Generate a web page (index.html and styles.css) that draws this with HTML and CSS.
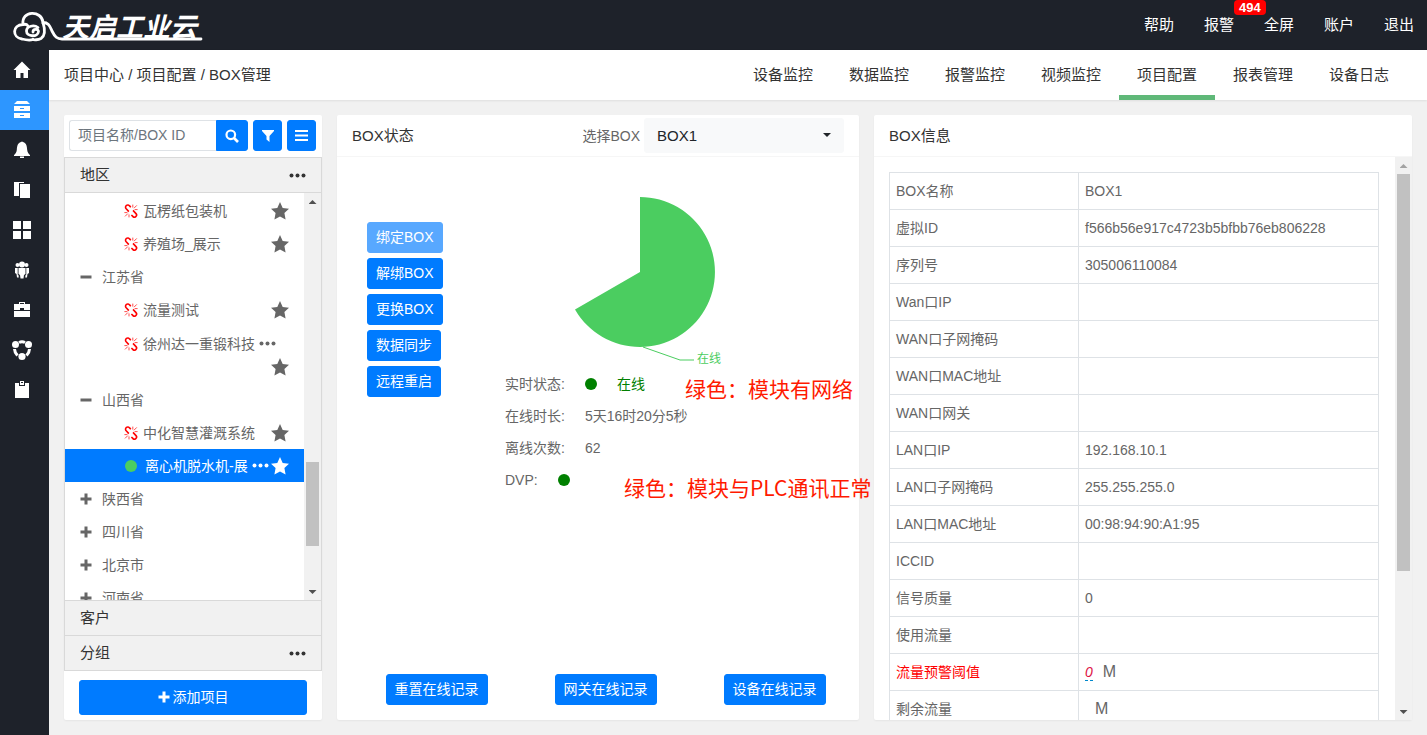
FILE: index.html
```html
<!DOCTYPE html>
<html lang="zh-CN">
<head>
    <meta charset="UTF-8">
    <meta name="viewport" content="width=device-width, initial-scale=1.0">
    <title>BOX管理</title>
    <link rel="stylesheet" href="styles.css">
</head>
<body>
    <!-- shared icons -->
    <svg class="sprite" aria-hidden="true">
        <symbol id="i-star" viewBox="0 0 18 18"><path d="M9 0l2.7 5.9 6.3.8-4.6 4.4 1.2 6.4L9 14.4l-5.6 3.1 1.2-6.4L0 6.7l6.3-.8z"/></symbol>
        <symbol id="i-dots" viewBox="0 0 17 5"><circle cx="2.5" cy="2.5" r="2"/><circle cx="8.5" cy="2.5" r="2"/><circle cx="14.5" cy="2.5" r="2"/></symbol>
        <symbol id="i-plus" viewBox="0 0 12 12"><path d="M4.5 0.5h3v4h4v3h-4v4h-3v-4h-4v-3h4z"/></symbol>
        <symbol id="i-minus" viewBox="0 0 12 12"><path d="M0.5 4.5h11v3h-11z"/></symbol>
        <symbol id="i-broken" viewBox="0 0 14 14"><g fill="none" stroke="currentColor"><path stroke-width="1.6" d="M6.800 3.200L5.600 1.900A2.200 2.200 0 0 0 2 4.600L4.800 7.600M9 6.400l3 3.200a2 2 0 0 1-3.200 2.800L7.400 11"/><path stroke-width="0.700" d="M8.800 3.600V.6M10 4.200l2.800-2.800M10.600 5.600h3M5 10.400v3M3.800 9.600L1 12.400M3.400 8.600H.4"/></g></symbol>
    </svg>

    <header class="header">
        <a class="logo" href="#" aria-label="天启工业云">
            <svg width="205" height="50" viewBox="0 0 205 50">
                <g fill="none" stroke="#fff" stroke-width="2.8" stroke-linecap="round">
                    <path d="M33 39.500C30 40.500 26 40 22 39C12 37.500 12 25 23 24.500C21 10 42 10 43 22.500C49 22.500 50 27 52 31C55 37 57 39 62 39H201"/>
                    <path d="M23 24.500C25 24 27 24.500 28 26M43 22.500C45 29 45 36 41 38.500C38 40 34 40 33 39.500"/>
                    <path d="M38 27.500C34 24.500 26.500 26 26.500 31C26.500 37 38 37.500 38.500 31.500C38.500 28.500 33 28.500 33 32"/>
                </g>
                <text class="logo-text" x="62" y="37">天启工业云</text>
            </svg>
        </a>
        <nav class="header-nav">
            <a href="#">帮助</a>
            <a href="#" class="alarm">报警<span class="badge">494</span></a>
            <a href="#">全屏</a>
            <a href="#">账户</a>
            <a href="#">退出</a>
        </nav>
    </header>

    <div class="layout">
        <nav class="sidebar">
            <a href="#" aria-label="首页"><svg viewBox="0 0 18 18"><path d="M9 .5L17.500 9H15v8h-4.500v-5h-3v5H3V9H.5z"/></svg></a>
            <a href="#" class="active" aria-label="项目"><svg viewBox="0 0 18 18"><path d="M4 0h10l3 3H1zM1 5h16v5H1zM1 12h16v5H1z"/><path class="cut" d="M7 7h4v1H7zM7 14h4v1H7z"/></svg></a>
            <a href="#" aria-label="报警"><svg viewBox="0 0 18 18"><path d="M8 1q1-1 2 0c3.500 1 4 4.500 4.200 8 .3 2.500 1.500 4 2.800 5v1H1v-1c1.300-1 2.500-2.500 2.800-5C4 5.500 4.500 2 8 1zM7 15.500h4v1.500H7z"/></svg></a>
            <a href="#" aria-label="文档"><svg viewBox="0 0 18 18"><path d="M1 1h10v1H6v13H1zM7 3h10v14H7z"/></svg></a>
            <a href="#" aria-label="面板"><svg viewBox="0 0 18 18"><path d="M0 0h8v8H0zM10 0h8v8h-8zM0 10h8v8H0zM10 10h8v8h-8z"/></svg></a>
            <a href="#" aria-label="用户"><svg viewBox="0 0 18 18"><circle cx="9" cy="3.500" r="3"/><circle cx="4.500" cy="4" r="2"/><circle cx="13.500" cy="4" r="2"/><path d="M5.500 7h7v6l-1.500 1-.5 3.500h-3L7 14l-1.500-1zM2 7h2.700v6.500l.8.700.3 2.300H4L3.500 13 2 12zM16 7h-2.700v6.500l-.8.700-.3 2.300H14l.5-3.500 1.500-1z"/></svg></a>
            <a href="#" aria-label="工具"><svg viewBox="0 0 18 18"><path d="M6 1h6v2h5v6h-6V7H7v2H1V3h5zm1 1v1h4V2zM1 10h16v6H1z"/></svg></a>
            <a href="#" aria-label="关联"><svg class="big" viewBox="0 0 22 22"><circle cx="4.500" cy="5.500" r="3.500"/><circle cx="17.500" cy="5.500" r="3.500"/><circle cx="11" cy="17.500" r="3.600"/><path fill="none" stroke="#fff" stroke-width="3" d="M8 3.500Q11 2 14 3.500M3.500 10Q3.500 13 6.500 16.500M18.500 10Q18.500 13 15.500 16.500"/></svg></a>
            <a href="#" aria-label="记录"><svg viewBox="0 0 18 18"><path d="M2 2h4v3h6V2h4v15H2zM7 4V0h4v4z"/><path class="dark" d="M8 1h2v1H8z"/></svg></a>
        </nav>

        <div class="main">
            <div class="topbar">
                <div class="breadcrumb">项目中心 / 项目配置 / BOX管理</div>
                <nav class="tabs">
                    <a href="#">设备监控</a>
                    <a href="#">数据监控</a>
                    <a href="#">报警监控</a>
                    <a href="#">视频监控</a>
                    <a href="#" class="active">项目配置</a>
                    <a href="#">报表管理</a>
                    <a href="#">设备日志</a>
                </nav>
            </div>

            <main class="content">
                <section class="card">
                    <form class="search">
                        <input type="text" placeholder="项目名称/BOX ID" aria-label="项目名称/BOX ID">
                        <button type="button" class="btn search-btn" aria-label="搜索"><svg width="14" height="14" viewBox="0 0 14 14"><circle cx="5.800" cy="5.800" r="4.300" stroke-width="2.200"/><path stroke-width="2.600" d="M9 9l4 4"/></svg></button>
                        <button type="button" class="btn icon-btn" aria-label="筛选"><svg width="12" height="12" viewBox="0 0 12 12"><path d="M0 0h12v1L7.500 6v6l-3-2.500V6L0 1z"/></svg></button>
                        <button type="button" class="btn icon-btn" aria-label="列表"><svg width="13" height="11" viewBox="0 0 13 11"><path d="M0 0h13v2H0zM0 4.500h13v2H0zM0 9h13v2H0z"/></svg></button>
                    </form>
                    <div class="accordion">
                        <h3>地区<svg class="dots"><use href="#i-dots"/></svg></h3>
                        <div class="tree-wrap">
                            <ul class="tree">
                                <li class="leaf"><svg class="broken"><use href="#i-broken"/></svg><span>瓦楞纸包装机</span><svg class="star"><use href="#i-star"/></svg></li>
                                <li class="leaf"><svg class="broken"><use href="#i-broken"/></svg><span>养殖场_展示</span><svg class="star"><use href="#i-star"/></svg></li>
                                <li><svg class="fold"><use href="#i-minus"/></svg>江苏省</li>
                                <li class="leaf"><svg class="broken"><use href="#i-broken"/></svg><span>流量测试</span><svg class="star"><use href="#i-star"/></svg></li>
                                <li class="leaf tall"><svg class="broken"><use href="#i-broken"/></svg><span>徐州达一重锻科技</span><svg class="dots"><use href="#i-dots"/></svg><svg class="star"><use href="#i-star"/></svg></li>
                                <li><svg class="fold"><use href="#i-minus"/></svg>山西省</li>
                                <li class="leaf"><svg class="broken"><use href="#i-broken"/></svg><span>中化智慧灌溉系统</span><svg class="star"><use href="#i-star"/></svg></li>
                                <li class="leaf active"><i class="online"></i><span>离心机脱水机-展</span><svg class="dots"><use href="#i-dots"/></svg><svg class="star"><use href="#i-star"/></svg></li>
                                <li><svg class="fold"><use href="#i-plus"/></svg>陕西省</li>
                                <li><svg class="fold"><use href="#i-plus"/></svg>四川省</li>
                                <li><svg class="fold"><use href="#i-plus"/></svg>北京市</li>
                                <li><svg class="fold"><use href="#i-plus"/></svg>河南省</li>
                            </ul>
                            <div class="scrollbar"><i class="up"></i><div class="track tree-track"><div class="thumb"></div></div><i class="down"></i></div>
                        </div>
                        <h3>客户</h3>
                        <h3>分组<svg class="dots"><use href="#i-dots"/></svg></h3>
                    </div>
                    <button type="button" class="btn add-btn"><svg width="12" height="12"><use href="#i-plus"/></svg>添加项目</button>
                </section>

                <section class="card status-card">
                    <div class="card-header">
                        <h2>BOX状态</h2>
                        <label for="box">选择BOX</label>
                        <div class="select">
                            <select id="box"><option>BOX1</option></select>
                        </div>
                    </div>
                    <div class="status-body">
                        <div class="actions">
                            <button type="button" class="btn" disabled>绑定BOX</button>
                            <button type="button" class="btn">解绑BOX</button>
                            <button type="button" class="btn">更换BOX</button>
                            <button type="button" class="btn">数据同步</button>
                            <button type="button" class="btn">远程重启</button>
                        </div>
                        <div class="status">
                            <svg class="pie" width="270" height="211" viewBox="0 0 270 211">
                                <path fill="#4bcd60" d="M135 115V40A75 75 0 1 1 70 152.500z"/>
                                <path fill="none" stroke="#4bcd60" d="M138 190L175 203H189"/>
                                <text x="192" y="206">在线</text>
                            </svg>
                            <dl>
                                <div><dt>实时状态:</dt><dd><i class="dot"></i><span class="green">在线</span></dd></div>
                                <div><dt>在线时长:</dt><dd>5天16时20分5秒</dd></div>
                                <div><dt>离线次数:</dt><dd>62</dd></div>
                                <div><dt>DVP:</dt><dd><i class="dot"></i></dd></div>
                            </dl>
                            <p class="note note-net">绿色：模块有网络</p>
                            <p class="note note-plc">绿色：模块与PLC通讯正常</p>
                        </div>
                    </div>
                    <div class="records">
                        <button type="button" class="btn">重置在线记录</button>
                        <button type="button" class="btn">网关在线记录</button>
                        <button type="button" class="btn">设备在线记录</button>
                    </div>
                </section>

                <section class="card">
                    <div class="card-header">
                        <h2>BOX信息</h2>
                    </div>
                    <div class="info-wrap">
                        <div class="info">
                            <table>
                                <tr><th>BOX名称</th><td>BOX1</td></tr>
                                <tr><th>虚拟ID</th><td>f566b56e917c4723b5bfbb76eb806228</td></tr>
                                <tr><th>序列号</th><td>305006110084</td></tr>
                                <tr><th>Wan口IP</th><td></td></tr>
                                <tr><th>WAN口子网掩码</th><td></td></tr>
                                <tr><th>WAN口MAC地址</th><td></td></tr>
                                <tr><th>WAN口网关</th><td></td></tr>
                                <tr><th>LAN口IP</th><td>192.168.10.1</td></tr>
                                <tr><th>LAN口子网掩码</th><td>255.255.255.0</td></tr>
                                <tr><th>LAN口MAC地址</th><td>00:98:94:90:A1:95</td></tr>
                                <tr><th>ICCID</th><td></td></tr>
                                <tr><th>信号质量</th><td>0</td></tr>
                                <tr><th>使用流量</th><td></td></tr>
                                <tr><th class="warn">流量预警阈值</th><td><a href="#" class="editable">0</a><span class="unit">M</span></td></tr>
                                <tr><th>剩余流量</th><td><span class="unit">M</span></td></tr>
                            </table>
                        </div>
                        <div class="scrollbar"><i class="up muted"></i><div class="track info-track"><div class="thumb"></div></div><i class="down"></i></div>
                    </div>
                </section>
            </main>
        </div>
    </div>
</body>
</html>
```
FILE: styles.css
```css
* {
    box-sizing: border-box;
}
body {
    margin: 0;
    height: 100vh;
    display: flex;
    flex-direction: column;
    overflow: hidden;
    background: #f1f1f1;
    color: #666;
    font: 14px/20px "Liberation Sans", "Noto Sans CJK SC", sans-serif;
}
a {
    color: inherit;
    text-decoration: none;
}
h2, h3, p, ul, dl, dd {
    margin: 0;
    padding: 0;
    font-weight: normal;
}
svg {
    fill: currentColor;
    flex-shrink: 0;
}
button, input, select {
    font: inherit;
}
.sprite {
    position: absolute;
    width: 0;
    height: 0;
}

/* header */
.header {
    height: 50px;
    flex-shrink: 0;
    display: flex;
    justify-content: space-between;
    background: #1e222a;
    color: #fff;
}
.logo {
    display: flex;
}
.logo-text {
    font-size: 27px;
    font-weight: bold;
    font-style: italic;
}
.header-nav {
    display: flex;
    align-items: center;
    gap: 30px;
    padding-right: 13px;
    font-size: 15px;
}
.alarm {
    position: relative;
}
.badge {
    position: absolute;
    left: 30px;
    top: -15px;
    padding: 0 5px;
    border-radius: 4px;
    background: #f00;
    font-size: 13px;
    line-height: 15px;
    font-weight: bold;
}

/* sidebar */
.layout {
    flex: 1;
    min-height: 0;
    display: flex;
}
.sidebar {
    width: 49px;
    flex-shrink: 0;
    background: #1e222a;
    color: #fff;
}
.sidebar a {
    height: 40px;
    padding-right: 5px;
    display: flex;
    align-items: center;
    justify-content: center;
}
.sidebar .active {
    background: #2d96ff;
}
.sidebar svg {
    width: 18px;
    height: 18px;
}
.sidebar .big {
    width: 22px;
    height: 22px;
}
.cut {
    fill: #2d96ff;
}
.dark {
    fill: #1e222a;
}

/* top bar */
.main {
    flex: 1;
    min-width: 0;
    display: flex;
    flex-direction: column;
}
.topbar {
    height: 50px;
    flex-shrink: 0;
    display: flex;
    align-items: center;
    justify-content: space-between;
    padding: 0 20px 0 15px;
    background: #fff;
    box-shadow: 0 1px 2px rgba(0, 0, 0, 0.08);
    color: #333;
    font-size: 15px;
}
.tabs {
    display: flex;
}
.tabs a {
    padding: 0 18px;
    line-height: 50px;
}
.tabs .active {
    box-shadow: inset 0 -5px #5fb878;
}

/* cards */
.content {
    flex: 1;
    min-height: 0;
    display: grid;
    grid-template-columns: 258fr 522fr 538fr;
    grid-template-rows: minmax(0, 1fr);
    gap: 15px;
    padding: 15px;
}
.card {
    display: flex;
    flex-direction: column;
    min-width: 0;
    background: #fff;
    border-radius: 2px;
    box-shadow: 0 1px 2px rgba(0, 0, 0, 0.05);
}
.card-header {
    height: 42px;
    flex-shrink: 0;
    display: flex;
    align-items: center;
    padding: 0 15px;
    border-bottom: 1px solid #f6f6f6;
}
.card-header h2 {
    flex: 1;
    color: #333;
    font-size: 15px;
}
.btn {
    height: 31px;
    padding: 0 8px 2px;
    border: 1px solid #007bff;
    border-radius: 3px;
    background: #007bff;
    color: #fff;
    cursor: pointer;
}
.btn:hover {
    background: #0069d9;
}
.btn:disabled {
    opacity: 0.65;
    background: #007bff;
    cursor: default;
}

/* project tree */
.search {
    display: flex;
    padding: 5px 6px 6px 5px;
}
.search input {
    flex: 1;
    min-width: 0;
    height: 31px;
    padding: 0 8px 2px;
    border: 1px solid #dee2e6;
    border-right: 0;
    border-radius: 3px 0 0 3px;
    outline: none;
}
.search input::placeholder {
    color: #6c757d;
}
.search .btn {
    display: flex;
    align-items: center;
    justify-content: center;
    padding: 0;
}
.search .search-btn {
    width: 32px;
    border-radius: 0 3px 3px 0;
}
.search-btn svg {
    fill: none;
    stroke: #fff;
}
.search .icon-btn {
    width: 29px;
    margin-left: 5px;
}
.accordion {
    flex: 1;
    min-height: 0;
    display: flex;
    flex-direction: column;
    border: 1px solid #d9d9d9;
}
.accordion h3 {
    height: 34px;
    flex-shrink: 0;
    display: flex;
    align-items: center;
    justify-content: space-between;
    padding: 0 15px;
    background: #f1f1f1;
    color: #333;
    font-size: 15px;
}
.accordion h3 + h3 {
    height: 35px;
    border-top: 1px solid #d9d9d9;
}
.dots {
    width: 17px;
    height: 5px;
}
.tree-wrap {
    flex: 1;
    min-height: 0;
    display: flex;
    border: 1px solid #d9d9d9;
    border-width: 1px 0;
}
.tree {
    flex: 1;
    padding-top: 1px;
    overflow: hidden;
    list-style: none;
}
.tree li {
    min-height: 33px;
    display: flex;
    align-items: center;
    padding: 0 15px;
}
.tree .leaf {
    padding-left: 59px;
}
.tree .tall {
    flex-wrap: wrap;
    align-content: center;
    row-gap: 4px;
    height: 57px;
}
.tree .active {
    background: #007bff;
    color: #fff;
}
.tree .dots {
    margin-left: 4px;
}
.fold {
    width: 12px;
    height: 12px;
    margin-right: 10px;
}
.broken {
    width: 14px;
    height: 14px;
    margin-right: 5px;
    color: #f00;
}
.online {
    width: 12px;
    height: 12px;
    margin: 0 8px 0 1px;
    border-radius: 50%;
    background: #4bcd60;
}
.star {
    width: 18px;
    height: 18px;
    margin-left: auto;
}
.add-btn {
    display: flex;
    align-items: center;
    justify-content: center;
    gap: 3px;
    height: 35px;
    margin: 9px 15px 5px;
}

/* scroll bars */
.scrollbar {
    width: 17px;
    flex-shrink: 0;
    display: flex;
    flex-direction: column;
    align-items: center;
    background: #f1f1f1;
}
.scrollbar .up, .scrollbar .down {
    width: 8px;
    height: 4px;
    margin: 7px 0 6px;
    background: #505050;
    clip-path: polygon(50% 0, 100% 100%, 0 100%);
}
.scrollbar .down {
    clip-path: polygon(0 0, 100% 0, 50% 100%);
}
.scrollbar .muted {
    background: #a3a3a3;
}
.track {
    flex: 1;
    width: 13px;
    display: flex;
    flex-direction: column;
}
.thumb {
    background: #c1c1c1;
}
.tree-track {
    justify-content: flex-end;
    padding-bottom: 37px;
}
.tree-track .thumb {
    height: 25%;
}
.info-track .thumb {
    height: 75%;
}

/* BOX status */
.select {
    position: relative;
    width: 200px;
    margin-left: 4px;
}
.select select {
    width: 100%;
    height: 35px;
    padding: 0 12px;
    border: 1px solid #f8f9fa;
    border-radius: 3px;
    background: #f8f9fa;
    color: #212529;
    font-size: 15px;
    appearance: none;
}
.select::after {
    content: "";
    position: absolute;
    right: 13px;
    top: 15px;
    border: 4px solid transparent;
    border-top-color: #212529;
    border-bottom: 0;
    pointer-events: none;
}
.status-body {
    flex: 1;
    min-height: 0;
    display: grid;
    grid-template-columns: 138px 1fr;
    padding-left: 30px;
}
.actions {
    display: flex;
    flex-direction: column;
    align-items: flex-start;
    gap: 5px;
    padding-top: 65px;
}
.status {
    position: relative;
}
.pie {
    display: block;
}
.pie text {
    fill: #4bcd60;
    font-size: 12px;
}
.status dl div {
    display: flex;
    line-height: 32px;
}
.status dd {
    display: flex;
    align-items: center;
    margin-left: 20px;
}
.dot {
    width: 12px;
    height: 12px;
    margin-right: 20px;
    border-radius: 50%;
    background: #008000;
}
.green {
    color: #008000;
}
/* notes lie over the status panel */
.note {
    position: absolute;
    color: #ff1a00;
    font: 21px/30px "Noto Sans CJK SC", sans-serif;
    white-space: nowrap;
}
.note-net {
    left: 180px;
    top: 216px;
}
.note-plc {
    left: 119px;
    top: 315px;
}
.records {
    display: grid;
    grid-template-columns: repeat(3, 1fr);
    justify-items: center;
    padding: 0 0 15px 15px;
}

/* BOX info */
.info-wrap {
    flex: 1;
    min-height: 0;
    display: flex;
}
.info {
    flex: 1;
    overflow: hidden;
    padding: 15px 16px 0 15px;
}
.info table {
    width: 100%;
    border-collapse: collapse;
    table-layout: fixed;
}
.info th, .info td {
    height: 37px;
    padding: 0 6px;
    border: 1px solid #dee2e6;
    text-align: left;
    font-weight: normal;
}
.info th {
    width: 189px;
}
.info .warn {
    color: #f00;
}
.editable {
    border-bottom: 1px dashed #0088cc;
    color: #dd1144;
    font-style: italic;
}
.unit {
    margin-left: 10px;
    font-size: 16px;
}
```
